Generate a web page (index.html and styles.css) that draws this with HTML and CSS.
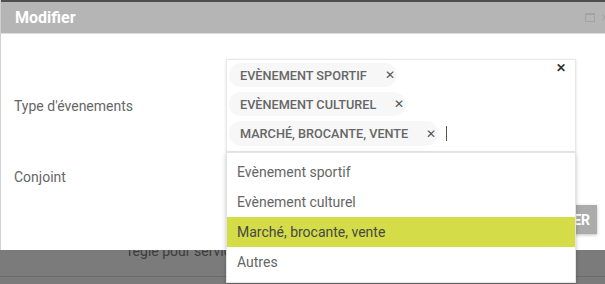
FILE: index.html
```html
<!DOCTYPE html>
<html lang="fr">
<head>
    <meta charset="UTF-8">
    <title>Modifier</title>
    <link rel="stylesheet" href="styles.css">
</head>
<body>
    <div class="dialog">
        <div class="dialog-header">
            <span class="dialog-title">Modifier</span>
            <span class="dialog-tools">
                <span class="tool-max"></span>
                <span class="tool-close">&#x2715;</span>
            </span>
        </div>

        <div class="dialog-body">
            <div class="form-row form-row-types">
                <label class="form-label">Type d'évenements</label>
                <div class="select-wrap">
                    <div class="select-box">
                        <div class="chip"><span class="chip-text">Evènement sportif</span><span class="chip-remove">&#x2715;</span></div>
                        <div class="chip"><span class="chip-text">Evènement culturel</span><span class="chip-remove">&#x2715;</span></div>
                        <div class="chip"><span class="chip-text">Marché, brocante, vente</span><span class="chip-remove">&#x2715;</span><span class="caret"></span></div>
                        <span class="select-clear">&#x2715;</span>
                    </div>
                    <!-- open dropdown -->
                    <ul class="dropdown">
                        <li class="dropdown-item">Evènement sportif</li>
                        <li class="dropdown-item">Evènement culturel</li>
                        <li class="dropdown-item active">Marché, brocante, vente</li>
                        <li class="dropdown-item">Autres</li>
                    </ul>
                </div>
            </div>

            <div class="form-row form-row-partner">
                <label class="form-label">Conjoint</label>
            </div>

            <div class="dialog-actions">
                <button class="save-button">ENREGISTRER</button>
            </div>
        </div>
    </div>

    <div class="page-behind">
        <p class="page-text">régie pour service</p>
    </div>
</body>
</html>
```

FILE: styles.css
```css
body {
    margin: 0;
    padding: 0;
    background-color: #7b7b7b;
    font-family: Roboto, "Liberation Sans", sans-serif;
    color: #666;
    height: 284px;
    overflow: hidden;
}

.dialog {
    position: relative;
    z-index: 1;
    height: 250px;
    background-color: white;
    border-left: 1px solid #d0d0d0;
    box-sizing: border-box;
}

.dialog-header {
    height: 34px;
    box-sizing: border-box;
    background-color: #b5b5b5;
    border-top: 2px solid #4e4e4e;
    border-bottom: 1px solid #dcdcdc;
    display: flex;
    align-items: center;
    justify-content: space-between;
    padding: 0 0 0 14px;
}

.dialog-title {
    color: white;
    font-weight: bold;
    font-size: 16px;
}

.dialog-tools {
    display: flex;
    align-items: center;
    gap: 6px;
    margin-right: -4px;
}

.tool-max {
    width: 8px;
    height: 6px;
    border: 1px solid #a3a3a3;
    border-top-width: 2px;
}

.tool-close {
    color: #a3a3a3;
    font-size: 10px;
}

.dialog-body {
    padding-top: 25px;
}

.form-row {
    display: grid;
    grid-template-columns: 225px 350px;
    align-items: center;
}

.form-label {
    padding-left: 13px;
    font-size: 14px;
    color: #666;
}

.select-wrap {
    position: relative;
}

.select-box {
    position: relative;
    height: 93px;
    box-sizing: border-box;
    border: 1px solid #e8e8e8;
    box-shadow: 0 1px 3px rgba(0, 0, 0, 0.12);
    padding: 3px 2px;
    display: flex;
    flex-direction: column;
    align-items: flex-start;
    gap: 5px;
}

.chip {
    height: 24px;
    display: flex;
    align-items: center;
    background-color: #f7f7f7;
    border-radius: 12px;
    padding: 0 2px 0 11px;
    font-size: 12.7px;
    font-weight: 500;
    color: #666;
    text-transform: uppercase;
}

.chip-remove {
    margin-left: 18px;
    font-size: 12px;
    font-weight: normal;
    color: #555;
}

.caret {
    width: 1px;
    height: 15px;
    background-color: #555;
    margin: 0 -11px 0 10px;
}

.chip:last-of-type {
    height: 25px;
}

.select-clear {
    position: absolute;
    top: 1px;
    right: 9px;
    font-size: 12px;
    font-weight: bold;
    color: #333;
}

.dropdown {
    position: absolute;
    top: 93px;
    left: 0;
    width: 350px;
    box-sizing: border-box;
    margin: 0;
    padding: 4px 0 5px;
    list-style: none;
    background-color: white;
    border: 1px solid #e4e4e4;
    box-shadow: 0 2px 4px rgba(0, 0, 0, 0.25);
    z-index: 10;
}

.dropdown-item {
    height: 30px;
    line-height: 30px;
    padding-left: 10px;
    font-size: 14px;
    color: #666;
}

.dropdown-item.active {
    background-color: #d4dc47;
    color: #474747;
}

.form-row-partner {
    height: 50px;
}

.dialog-actions {
    display: flex;
    justify-content: flex-end;
    padding-right: 8px;
    margin-top: 3px;
}

.save-button {
    height: 29px;
    padding: 0 7px 0 16px;
    border: none;
    background-color: #ababab;
    color: white;
    font-family: Roboto, "Liberation Sans", sans-serif;
    font-size: 14px;
    font-weight: bold;
    box-shadow: 0 1px 3px rgba(0, 0, 0, 0.25);
}

.page-behind {
    margin-top: -8px;
    height: 34px;
    border-bottom: 1px solid #6a6a6a;
    background-color: #7b7b7b;
}

.page-text {
    margin: 0;
    padding-left: 128px;
    font-size: 14px;
    line-height: 18px;
    color: #3d3d3d;
}
```
